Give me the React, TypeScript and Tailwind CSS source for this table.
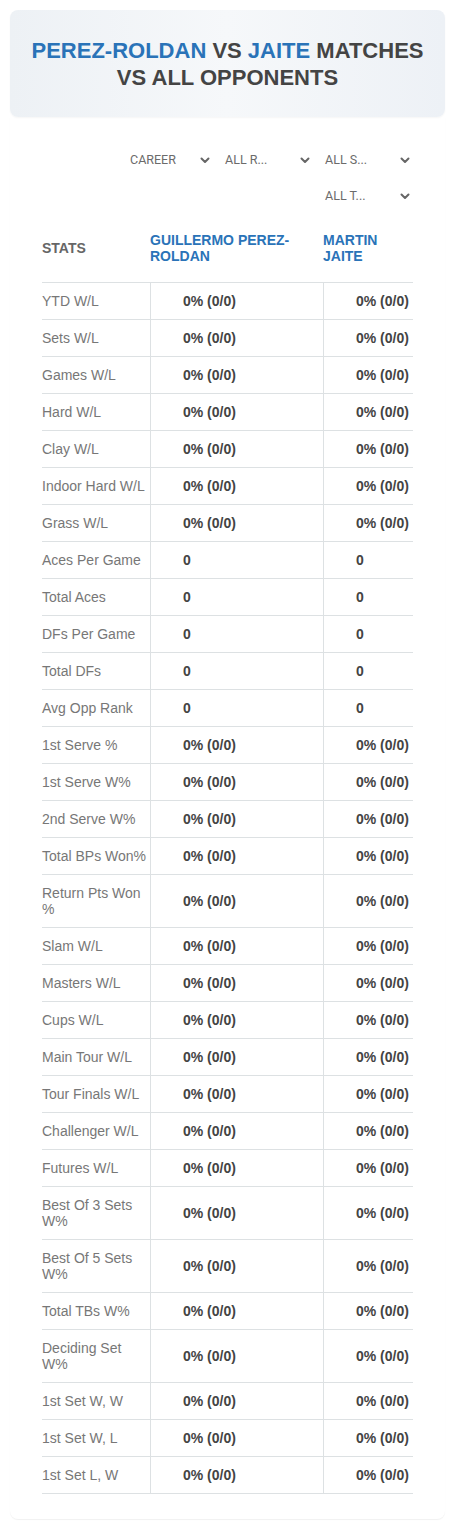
import React from "react"

const WL = "0% (0/0)"

// label, value shown in both columns
const rows: [string, string][] = [
  ["YTD W/L", WL],
  ["Sets W/L", WL],
  ["Games W/L", WL],
  ["Hard W/L", WL],
  ["Clay W/L", WL],
  ["Indoor Hard W/L", WL],
  ["Grass W/L", WL],
  ["Aces Per Game", "0"],
  ["Total Aces", "0"],
  ["DFs Per Game", "0"],
  ["Total DFs", "0"],
  ["Avg Opp Rank", "0"],
  ["1st Serve %", WL],
  ["1st Serve W%", WL],
  ["2nd Serve W%", WL],
  ["Total BPs Won%", WL],
  ["Return Pts Won %", WL],
  ["Slam W/L", WL],
  ["Masters W/L", WL],
  ["Cups W/L", WL],
  ["Main Tour W/L", WL],
  ["Tour Finals W/L", WL],
  ["Challenger W/L", WL],
  ["Futures W/L", WL],
  ["Best Of 3 Sets W%", WL],
  ["Best Of 5 Sets W%", WL],
  ["Total TBs W%", WL],
  ["Deciding Set W%", WL],
  ["1st Set W, W", WL],
  ["1st Set W, L", WL],
  ["1st Set L, W", WL],
]

function Chevron() {
  return (
    <svg width="10" height="7" viewBox="0 0 10 7" className="shrink-0">
      <path d="M1.5 1.5 L5 5 L8.5 1.5" fill="none" stroke="#666" strokeWidth="2" strokeLinecap="round" strokeLinejoin="round" />
    </svg>
  )
}

function Select({ label, first }: { label: string; first?: boolean }) {
  return (
    <div
      className={`w-[100px] h-9 flex items-center justify-between pr-[5px] font-['Roboto',sans-serif] text-[12.5px] text-[#6b6b6b] ${first ? "pl-[15px]" : "pl-[10px]"}`}
    >
      <span>{label}</span>
      <Chevron />
    </div>
  )
}

export default function App() {
  return (
    <div className="w-[455px] bg-white px-[10px] pt-[10px] pb-[9px] font-['Liberation_Sans',Arial,sans-serif]">
      {/* Title card */}
      <div className="rounded-lg bg-gradient-to-r from-[#edf1f5] via-[#f6f8fa] to-[#edf1f6] shadow-[0_1px_2px_rgba(0,0,0,0.04)] h-[107px] flex items-center justify-center text-center">
        <h1 className="text-[22px] leading-[27px] font-bold uppercase text-[#444]">
          <span className="text-[#2a73b8]">Perez-Roldan</span> vs <span className="text-[#2a73b8]">Jaite</span> Matches
          <br />
          vs All Opponents
        </h1>
      </div>

      {/* Stats card */}
      <div className="rounded-b-lg shadow-[0_1px_1px_rgba(0,0,0,0.06)] pt-[25px] pb-[25px] px-[32px]">
        <div className="flex justify-end -mr-[2px]">
          <div className="w-[300px] flex flex-wrap justify-end">
            <Select label="CAREER" first />
            <Select label="ALL R..." />
            <Select label="ALL S..." />
            <Select label="ALL T..." />
          </div>
        </div>

        <div className="w-[371px]">
          <div className="flex items-center h-[69px] border-b border-[#dde1e3] text-[14px] leading-4 font-bold uppercase">
            <div className="w-[108px] text-[#666]">Stats</div>
            <div className="w-[173px] text-[#2a73b8]">Guillermo Perez-Roldan</div>
            <div className="w-[90px] text-[#2a73b8]">Martin Jaite</div>
          </div>
          {rows.map(([label, value]) => (
            <div key={label} className="flex border-b border-[#dde1e3] text-[14px] leading-4">
              <div className="w-[108px] py-[10px] text-[#777]">{label}</div>
              <div className="w-[173px] border-l border-[#dde1e3] pl-[32px] flex items-center font-bold text-[#444]">{value}</div>
              <div className="w-[90px] border-l border-[#dde1e3] pl-[32px] flex items-center font-bold text-[#444]">{value}</div>
            </div>
          ))}
        </div>
      </div>
    </div>
  )
}
